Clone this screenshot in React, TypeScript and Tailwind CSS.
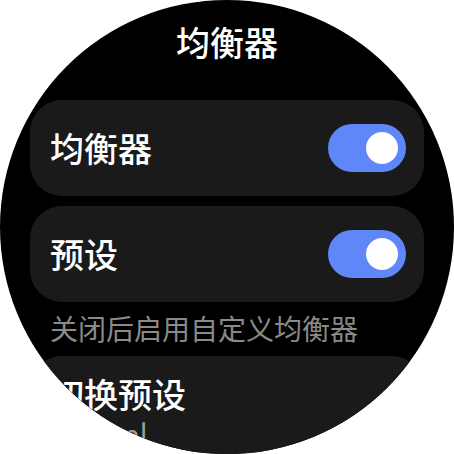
import React from "react";

function Toggle({ on }: { on: boolean }) {
  return (
    <div
      className={`flex h-[48px] w-[78px] items-center rounded-full px-[8px] ${
        on ? "justify-end bg-[#5f87f8]" : "justify-start bg-[#444444]"
      }`}
    >
      <div className="h-[32px] w-[32px] rounded-full bg-white" />
    </div>
  );
}

function SwitchRow({ label, on }: { label: string; on: boolean }) {
  return (
    <div className="mx-[30px] flex h-[96px] items-center justify-between rounded-[32px] bg-[#1a1a1a] pl-[20px] pr-[18px]">
      <span className="text-[34px] font-medium leading-[40px] text-white">{label}</span>
      <Toggle on={on} />
    </div>
  );
}

export default function App() {
  return (
    <div className="h-[454px] w-[454px] bg-white">
      <div
        className="flex h-[454px] w-[454px] flex-col overflow-hidden rounded-full bg-black"
        style={{ fontFamily: '"Noto Sans CJK SC", "Noto Sans", sans-serif' }}
      >
        <div className="pt-[22px] text-center text-[34px] font-medium leading-[40px] text-white">均衡器</div>

        <div className="mt-[38px] flex flex-col gap-[10px]">
          <SwitchRow label="均衡器" on={true} />
          <SwitchRow label="预设" on={true} />
        </div>

        <div className="mx-[30px] mt-[8px] pl-[20px] text-[28px] leading-[36px] text-[#8a8a8a]">
          关闭后启用自定义均衡器
        </div>

        <div className="mx-[30px] mt-[10px] flex flex-col rounded-[32px] bg-[#1a1a1a] pl-[20px] pt-[18px] pb-[20px]">
          <span className="text-[34px] font-medium leading-[40px] text-white">切换预设</span>
          <span className="mt-[2px] text-[28px] leading-[34px] text-[#9a9a9a]">Normal</span>
        </div>
      </div>
    </div>
  );
}
